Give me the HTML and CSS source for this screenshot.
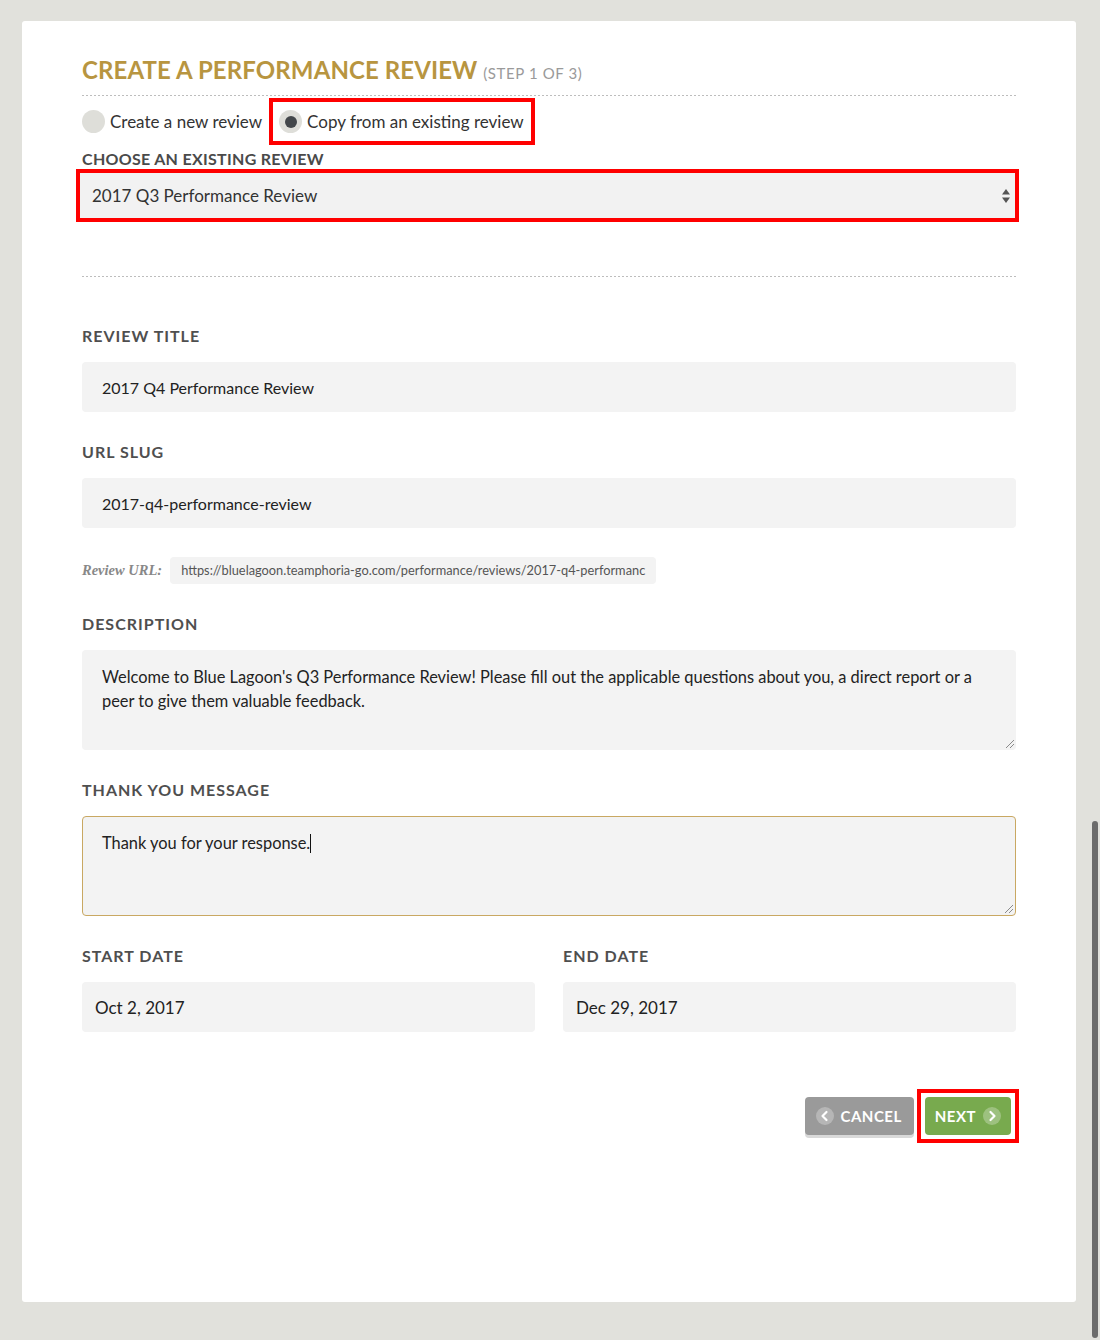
FILE: index.html
```html
<!DOCTYPE html>
<html lang="en">
<head>
<meta charset="utf-8">
<title>Create a Performance Review</title>
<link rel="stylesheet" href="styles.css">
</head>
<body>
<div class="page">
  <main class="card">
    <header class="header">
      <h1 class="title">CREATE A PERFORMANCE REVIEW <span class="step">(STEP 1 OF 3)</span></h1>
    </header>
    <div class="divider"></div>

    <div class="radio-row">
      <label class="option">
        <span class="radio"></span>
        <span class="option-text">Create a new review</span>
      </label>
      <label class="option option-highlight">
        <span class="radio radio-checked"><span class="dot"></span></span>
        <span class="option-text">Copy from an existing review</span>
      </label>
    </div>

    <div class="choose-label">CHOOSE AN EXISTING REVIEW</div>
    <div class="select-highlight">
      <div class="select-box">
        <span class="select-text">2017 Q3 Performance Review</span>
        <svg class="select-arrows" width="8" height="16" viewBox="0 0 8 16">
          <path d="M4 1 L8 6.5 H0 Z" fill="#555"/>
          <path d="M4 15 L8 9.5 H0 Z" fill="#555"/>
        </svg>
      </div>
    </div>

    <div class="divider divider-second"></div>

    <section class="field field-first">
      <div class="label">REVIEW TITLE</div>
      <div class="input">2017 Q4 Performance Review</div>
    </section>

    <section class="field">
      <div class="label">URL SLUG</div>
      <div class="input">2017-q4-performance-review</div>
    </section>

    <div class="url-row">
      <span class="url-label">Review URL:</span>
      <span class="url-box">https://bluelagoon.teamphoria-go.com/performance/reviews/2017-q4-performanc</span>
    </div>

    <section class="field field-after-url">
      <div class="label">DESCRIPTION</div>
      <div class="textarea">Welcome to Blue Lagoon's Q3 Performance Review! Please fill out the applicable questions about you, a direct report or a peer to give them valuable feedback.</div>
    </section>

    <section class="field">
      <div class="label">THANK YOU MESSAGE</div>
      <div class="textarea textarea-focus">Thank you for your response.<span class="caret"></span></div>
    </section>

    <div class="date-row">
      <section class="field date-field">
        <div class="label">START DATE</div>
        <div class="input date-input">Oct 2, 2017</div>
      </section>
      <section class="field date-field">
        <div class="label">END DATE</div>
        <div class="input date-input">Dec 29, 2017</div>
      </section>
    </div>

    <div class="actions">
      <button class="btn btn-cancel" type="button">
        <span class="btn-icon">
          <svg width="12" height="12" viewBox="0 0 12 12"><path d="M7.5 2 L3.5 6 L7.5 10" fill="none" stroke="#fff" stroke-width="2.2" stroke-linecap="round" stroke-linejoin="round"/></svg>
        </span>
        <span>CANCEL</span>
      </button>
      <div class="next-highlight">
        <button class="btn btn-next" type="button">
          <span>NEXT</span>
          <span class="btn-icon">
            <svg width="12" height="12" viewBox="0 0 12 12"><path d="M4.5 2 L8.5 6 L4.5 10" fill="none" stroke="#fff" stroke-width="2.2" stroke-linecap="round" stroke-linejoin="round"/></svg>
          </span>
        </button>
      </div>
    </div>
  </main>
</div>
<div class="scrollbar"></div>
</body>
</html>
```

FILE: styles.css
```css
* {
  box-sizing: border-box;
}

html, body {
  margin: 0;
  padding: 0;
}

body {
  background: #e1e1dc;
  font-family: Lato, "Noto Sans", "Liberation Sans", sans-serif;
  color: #333;
  width: 1100px;
  height: 1340px;
  overflow: hidden;
  position: relative;
}

.page {
  padding: 21px 24px 38px 22px;
}

.card {
  background: #fff;
  border-radius: 3px;
  height: 1281px;
  padding: 34px 60px 0 60px;
}

.title {
  margin: 0;
  font-size: 24px;
  line-height: 30px;
  font-weight: 700;
  letter-spacing: 0.1px;
  color: #b89540;
}

.step {
  font-size: 15px;
  font-weight: 400;
  letter-spacing: 0.6px;
  color: #9a9a9a;
}

.header {
  padding-bottom: 7px;
}

.divider {
  height: 1px;
  background-image: repeating-linear-gradient(to right, #bdbdbd 0 2px, transparent 2px 4px);
}

.radio-row {
  display: flex;
  align-items: center;
  margin-top: 2px;
  height: 47px;
}

.option {
  display: flex;
  align-items: center;
  gap: 5px;
  font-size: 17px;
  color: #333;
}

.option-highlight {
  border: 4px solid #f00;
  height: 47px;
  padding: 0 7px 0 6px;
  margin-left: 7px;
}

.radio {
  width: 23px;
  height: 23px;
  border-radius: 50%;
  background: #deded9;
  display: flex;
  align-items: center;
  justify-content: center;
}

.dot {
  width: 12px;
  height: 12px;
  border-radius: 50%;
  background: #43474b;
}

.choose-label {
  margin-top: 5px;
  font-size: 16px;
  line-height: 18px;
  font-weight: 700;
  letter-spacing: 0.3px;
  color: #4a4a4a;
}

.select-highlight {
  margin: 1px -3px 0 -6px;
  border: 4px solid #f00;
}

.select-box {
  height: 45px;
  background: #f2f2f2;
  display: flex;
  align-items: center;
  justify-content: space-between;
  padding: 0 5px 0 12px;
  font-size: 17px;
  color: #333;
}

.divider-second {
  margin-top: 54px;
}

.field {
  margin-top: 30px;
}

.field-first {
  margin-top: 49px;
}

.label {
  font-size: 16px;
  line-height: 20px;
  font-weight: 700;
  letter-spacing: 1px;
  color: #4f4f4f;
}

.input {
  margin-top: 16px;
  height: 50px;
  background: #f3f3f3;
  border-radius: 4px;
  display: flex;
  align-items: center;
  padding: 0 20px;
  font-size: 16px;
  color: #222;
}

.url-row {
  margin-top: 29px;
  display: flex;
  align-items: center;
  gap: 8px;
  height: 27px;
}

.url-label {
  font-family: "Liberation Serif", "DejaVu Serif", serif;
  font-style: italic;
  font-weight: 700;
  font-size: 14.5px;
  color: #888;
}

.url-box {
  height: 27px;
  background: #f3f3f3;
  border-radius: 4px;
  padding: 0 11px;
  font-size: 12.8px;
  line-height: 27px;
  color: #555;
  white-space: nowrap;
}

.field-after-url {
  margin-top: 30px;
}

.textarea {
  position: relative;
  margin-top: 16px;
  height: 100px;
  background: #f3f3f3;
  border-radius: 4px;
  padding: 15px 20px;
  font-size: 16.4px;
  line-height: 24px;
  color: #222;
}

.textarea::after {
  content: "";
  position: absolute;
  right: 2px;
  bottom: 2px;
  width: 8px;
  height: 8px;
  background-image: linear-gradient(135deg, transparent 0 44%, #8a8a8a 44% 52%, transparent 52% 70%, #8a8a8a 70% 78%, transparent 78%);
}

.textarea-focus {
  border: 1px solid #c9a862;
  padding: 14px 19px;
}

.caret {
  display: inline-block;
  width: 1px;
  height: 19px;
  background: #111;
  vertical-align: -4px;
}

.date-row {
  display: flex;
  gap: 28px;
}

.date-field {
  flex: 1;
}

.date-input {
  padding: 0 13px;
  font-size: 17px;
}

.actions {
  margin-top: 57px;
  margin-right: -3px;
  display: flex;
  justify-content: flex-end;
  align-items: center;
  gap: 3px;
}

.btn {
  height: 38px;
  border: none;
  border-radius: 4px;
  display: flex;
  align-items: center;
  gap: 7px;
  font-family: inherit;
  font-size: 15px;
  font-weight: 700;
  letter-spacing: 0.5px;
  color: #fff;
  cursor: pointer;
}

.btn-cancel {
  background: #9a9a9a;
  padding: 0 12px 0 11px;
  box-shadow: 0 3px 0 #d9d9d9;
}

.btn-next {
  background: #78aa4e;
  padding: 0 10px 0 10px;
}

.next-highlight {
  border: 4px solid #f00;
  padding: 4px;
}

.btn-icon {
  width: 18px;
  height: 18px;
  border-radius: 50%;
  background: rgba(255, 255, 255, 0.28);
  display: flex;
  align-items: center;
  justify-content: center;
}

.scrollbar {
  position: absolute;
  left: 1092px;
  top: 821px;
  width: 6px;
  height: 517px;
  border-radius: 3px;
  background: #6c6c6c;
}
```
